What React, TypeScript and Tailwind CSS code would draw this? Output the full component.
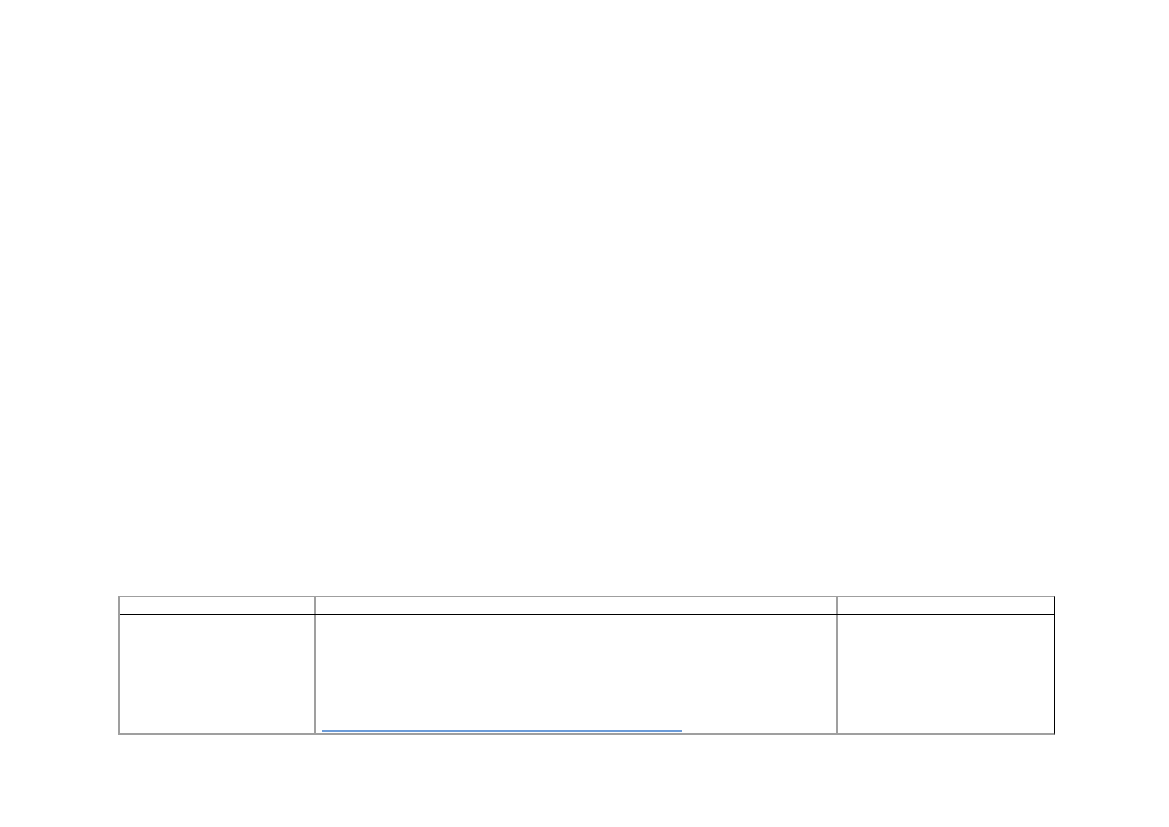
export default function App() {
  return (
    <div className="min-h-[827px] w-full bg-white pt-[596px] font-['Liberation_Sans',Arial,sans-serif]">
      <div className="ml-[118px] w-[937px] border-t border-l-2 border-b-2 border-r border-t-[#9f9f9f] border-l-[#9f9f9f] border-b-[#9f9f9f] border-r-black">
        <div className="flex h-[18px] border-b border-black">
          <div className="w-[196px] border-r-2 border-[#9f9f9f]" />
          <div className="w-[522px] border-r-2 border-[#9f9f9f]" />
          <div className="flex-1" />
        </div>
        <div className="flex h-[118px]">
          <div className="w-[196px] border-r-2 border-[#9f9f9f]" />
          <div className="flex w-[522px] flex-col justify-end border-r-2 border-[#9f9f9f] pl-[6px]">
            <div className="mb-[1px] h-[2px] w-[360px] bg-[#6b9bd8]" />
          </div>
          <div className="flex-1" />
        </div>
      </div>
    </div>
  )
}
